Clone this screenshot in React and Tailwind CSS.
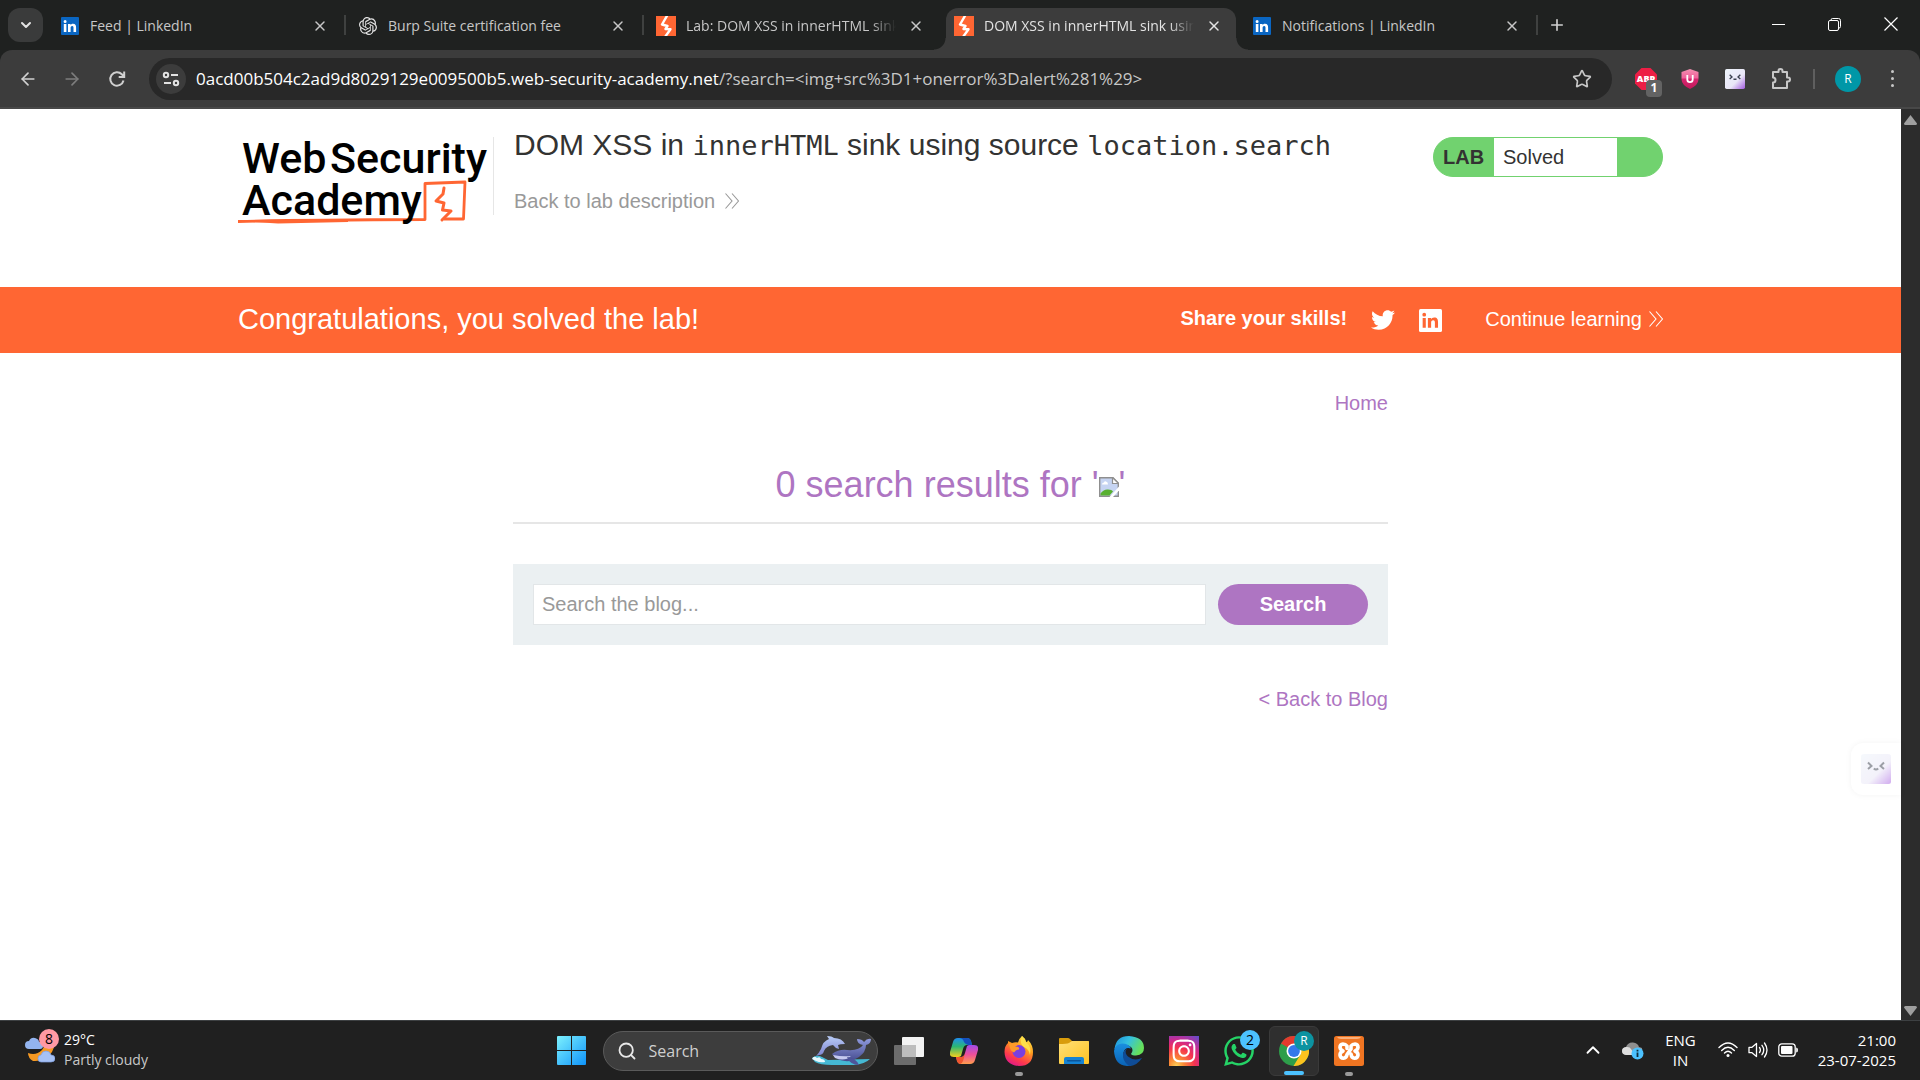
import { ChevronDown, ChevronUp, X, Plus, ArrowLeft, ArrowRight, Star, Search } from "lucide-react";
import { FaTwitter, FaWhatsapp, FaInstagram } from "react-icons/fa";
import { SiOpenai } from "react-icons/si";

function LinkedInIcon() {
  return (
    <svg viewBox="0 0 18 18" className="size-[18px]" aria-hidden="true">
      <rect width="18" height="18" rx="1" fill="#0a66c2" />
      <path fill="#fff" d="M2.8 7h2.6v8H2.8zM4.1 2.9a1.5 1.5 0 1 1 0 3 1.5 1.5 0 0 1 0-3zM7 7h2.5v1.1c.4-.7 1.3-1.3 2.5-1.3 2.6 0 3.1 1.7 3.1 3.9V15h-2.6v-3.9c0-.9 0-2.1-1.3-2.1s-1.6 1-1.6 2V15H7z" />
    </svg>
  );
}

function BoltIcon() {
  return (
    <svg viewBox="0 0 20 20" className="size-5" aria-hidden="true">
      <rect width="20" height="20" fill="#ff6633" />
      <path d="M11.500-1 6 8.500 11.500 10 9.500 13 14.500 13.200 9 21" fill="none" stroke="#fff" strokeWidth="2.400" strokeLinejoin="round" />
    </svg>
  );
}

function FaceIcon({ className }) {
  return (
    <svg viewBox="0 0 30 30" className={className} aria-hidden="true">
      <defs>
        <linearGradient id="faceFill" x1="0" y1="0" x2="1" y2="1">
          <stop offset="0" stopColor="#eef4fb" />
          <stop offset="0.6" stopColor="#e9e6f7" />
          <stop offset="1" stopColor="#a45be0" />
        </linearGradient>
      </defs>
      <rect width="30" height="30" rx="2.500" fill="url(#faceFill)" />
      <path d="M7 8.500 10.500 12 7 15M23 8.500 19.500 12 23 15M12.800 14.500q2.200 2 4.400 0" fill="none" stroke="#3c4250" strokeWidth="2" />
    </svg>
  );
}

const tabs = [
  { title: "Feed | LinkedIn", icon: <LinkedInIcon />, divider: true },
  { title: "Burp Suite certification fee", icon: <SiOpenai className="size-[18px] text-[#e3e3e3]" />, divider: true },
  { title: "Lab: DOM XSS in innerHTML sink", icon: <BoltIcon />, fade: true },
  { title: "DOM XSS in innerHTML sink using source", icon: <BoltIcon />, active: true, fade: true },
  { title: "Notifications | LinkedIn", icon: <LinkedInIcon />, divider: true },
];

function Tab({ title, icon, active, divider, fade }) {
  return (
    <div className="relative flex h-full w-[298px] min-w-0 shrink items-end pl-1 pr-1">
      {active && (
        <>
          <span className="absolute bottom-0 -left-2 size-3 bg-[radial-gradient(circle_at_0_0,transparent_11px,#3c3c3c_12px)]" />
          <span className="absolute bottom-0 -right-2 size-3 bg-[radial-gradient(circle_at_100%_0,transparent_11px,#3c3c3c_12px)]" />
        </>
      )}
      <div className={active ? "flex h-[42px] w-full items-center rounded-t-xl bg-[#3c3c3c] pb-1.5 text-[#e3e3e3]" : "flex h-[42px] w-full items-center pb-1.5 text-[#c7c7c7]"}>
        <span className="ml-2 flex w-5 justify-center">{icon}</span>
        <button type="button" className={fade ? "ml-2.5 w-[210px] overflow-hidden whitespace-nowrap text-left [mask-image:linear-gradient(to_right,black_88%,transparent)]" : "ml-2.5 w-[210px] overflow-hidden whitespace-nowrap text-left"}>
          {title}
        </button>
        <button type="button" aria-label={"Close " + title} className="ml-3 flex size-4 items-center justify-center">
          <X className="size-4" strokeWidth={2.200} />
        </button>
      </div>
      {divider && <span className="absolute right-0 top-[15px] h-5 w-0.5 bg-[#3f4140]" />}
    </div>
  );
}

function TabStrip() {
  return (
    <div className="flex h-[50px] items-stretch bg-[#1f2120] pl-2 text-sm">
      <button type="button" aria-label="Search tabs" className="mt-2 mr-[5px] flex h-[34px] w-[35px] shrink-0 items-center justify-center rounded-xl bg-[#3a3b3b] text-[#e3e3e3]">
        <ChevronDown className="size-4" strokeWidth={3} />
      </button>
      {tabs.map((t) => <Tab key={t.title} {...t} />)}
      <button type="button" aria-label="New tab" className="ml-2.5 flex shrink-0 items-center text-[#d0d0d0]">
        <Plus className="size-[18px]" strokeWidth={2.200} />
      </button>
      <div className="ml-auto flex h-12 items-stretch text-white">
        <button type="button" aria-label="Minimize" className="flex w-14 items-center justify-center">
          <span className="h-px w-[13px] bg-white" />
        </button>
        <button type="button" aria-label="Restore" className="flex w-14 items-center justify-center">
          <svg viewBox="0 0 13 13" className="size-[13px]" fill="none" stroke="#fff" aria-hidden="true">
            <rect x="0.500" y="2.500" width="10" height="10" rx="1.500" />
            <path d="M3 2.500V2Q3 .5 4.500.5h6Q12.500.5 12.500 2.500v6q0 1.500-1.500 1.500h-.5" />
          </svg>
        </button>
        <button type="button" aria-label="Close window" className="flex w-[58px] items-center justify-center">
          <svg viewBox="0 0 14 14" className="size-3.5" fill="none" stroke="#fff" strokeWidth="1.200" aria-hidden="true">
            <path d="M.5.500l13 13M13.500.500l-13 13" />
          </svg>
        </button>
      </div>
    </div>
  );
}

function Toolbar() {
  return (
    <div className="bg-[#1f2120]">
      <div className="flex h-[59px] items-center rounded-t-xl border-b-2 border-[#484848] bg-[#3c3c3c] text-[#c7c7c7]">
        <button type="button" aria-label="Back" className="ml-[18px] text-[#d0d0d0]"><ArrowLeft className="size-5" strokeWidth={2} /></button>
        <button type="button" aria-label="Forward" className="ml-6 text-[#7d7d7d]"><ArrowRight className="size-5" strokeWidth={2} /></button>
        <button type="button" aria-label="Reload" className="ml-[25px] text-[#d0d0d0]">
          <svg viewBox="0 0 20 20" className="size-5" fill="none" stroke="currentColor" strokeWidth="2" aria-hidden="true">
            <path d="M16.500 11.500A6.700 6.700 0 1 1 14.800 5.300L17 7.500M17.200 2.500V8h-5.500" />
          </svg>
        </button>
        <div className="ml-[22px] flex h-[42px] min-w-0 flex-1 items-center rounded-full bg-[#282828] pl-[7px] pr-5">
          <button type="button" aria-label="View site information" className="flex size-[30px] shrink-0 items-center justify-center rounded-full bg-[#3c3c3c]">
            <svg viewBox="0 0 18 16" className="h-4 w-[18px]" fill="none" stroke="#e3e3e3" strokeWidth="2" aria-hidden="true">
              <circle cx="4" cy="4" r="2.200" /><path d="M9 4h7M2 12h7" /><circle cx="14" cy="12" r="2.200" />
            </svg>
          </button>
          <div aria-label="Address" className="ml-2.5 min-w-0 flex-1 overflow-hidden whitespace-nowrap text-[17px] leading-6 text-[#c7c7c7]">
            <span className="text-white">0acd00b504c2ad9d8029129e009500b5.web-security-academy.net</span>
            /?search=&lt;img+src%3D1+onerror%3Dalert%281%29&gt;
          </div>
          <button type="button" aria-label="Bookmark this tab"><Star className="size-5" strokeWidth={2} /></button>
        </div>
        <div className="ml-[23px] flex shrink-0 items-center">
          <button type="button" aria-label="AdBlock Plus, 1 blocked" className="relative">
            <svg viewBox="0 0 22 22" className="size-[22px]" aria-hidden="true">
              <path d="M6.500 0h9L22 6.500v9L15.500 22h-9L0 15.500v-9z" fill="#ed1e45" />
              <text x="11" y="14" textAnchor="middle" fill="#fff" fontSize="9" fontWeight="800">ABP</text>
            </svg>
            <span className="absolute top-3 left-[11px] flex h-[17px] w-4 items-center justify-center rounded bg-[#636363] text-xs font-bold text-white">1</span>
          </button>
          <button type="button" aria-label="Shield extension" className="ml-6">
            <svg viewBox="0 0 18 20" className="h-5 w-[18px]" aria-hidden="true">
              <defs><linearGradient id="shield" x1="0" y1="0" x2="0" y2="1"><stop offset="0" stopColor="#f48fb1" /><stop offset="0.45" stopColor="#f0609a" /><stop offset="0.5" stopColor="#d8266f" /><stop offset="1" stopColor="#c2185b" /></linearGradient></defs>
              <path d="M9 0 17.500 3v7q0 6-8.500 10Q.5 16 .5 10V3z" fill="url(#shield)" />
              <path d="M6.300 6v4.500a2.700 2.700 0 0 0 5.400 0V6" fill="none" stroke="#fff" strokeWidth="1.800" />
            </svg>
          </button>
          <button type="button" aria-label="Face extension" className="ml-[26px]"><FaceIcon className="size-5" /></button>
          <button type="button" aria-label="Extensions" className="ml-[25px]">
            <svg viewBox="0 0 22 22" className="size-[22px]" fill="none" stroke="currentColor" strokeWidth="2" strokeLinejoin="round" aria-hidden="true">
              <path d="M3 4h5.500V3a2 2 0 0 1 4 0v1H17v5.500h1a2 2 0 0 1 0 4h-1V20H3v-5.500a2.500 2.500 0 0 0 0-5z" />
            </svg>
          </button>
          <span className="ml-[21px] h-5 w-0.5 bg-[#5f5f5f]" />
          <button type="button" aria-label="Profile" className="ml-5 flex size-[26px] items-center justify-center rounded-full bg-[#0097a7] text-xs text-white">R</button>
          <button type="button" aria-label="Menu" className="mr-[18px] ml-[21px] flex w-5 flex-col items-center gap-1">
            <span className="size-[3px] rounded-full bg-[#c7c7c7]" />
            <span className="size-[3px] rounded-full bg-[#c7c7c7]" />
            <span className="size-[3px] rounded-full bg-[#c7c7c7]" />
          </button>
        </div>
      </div>
    </div>
  );
}

function DoubleChevron() {
  return (
    <svg viewBox="0 0 14 16" className="h-4 w-3.5" fill="none" stroke="currentColor" strokeWidth="1.100" aria-hidden="true">
      <path d="M.5.500 7 8 .5 15.500M7 .5 13.500 8 7 15.500" />
    </svg>
  );
}

function AcademyLogo() {
  return (
    <a href="#academy" aria-label="Web Security Academy">
      <svg viewBox="0 0 250 92" className="h-[92px] w-[250px]" fontFamily="Roboto, sans-serif" fontSize="43" fontWeight="500" aria-hidden="true">
        <path d="M0 84.500Q60 83 187 82.500V46.500L227 45 225.500 82H206" fill="none" stroke="#ff6633" strokeWidth="2.800" strokeLinejoin="round" />
        <path d="M0 84l110-1v2L40 86.500z" fill="#ff6633" />
        <path d="M206 51 205 57 198 64 206 66 204.500 73 213 74 204 83" fill="none" stroke="#ff6633" strokeWidth="3" strokeLinejoin="round" strokeLinecap="round" />
        <text x="4" y="36">Web</text>
        <text x="92" y="36">Security</text>
        <text x="4" y="78">Academy</text>
      </svg>
    </a>
  );
}

function LabHeader() {
  return (
    <header className="mx-auto flex h-[178px] w-full max-w-[1425px] items-start">
      <div className="mt-7 flex h-[78px] w-64 shrink-0 border-r border-[#e6e6e6]">
        <AcademyLogo />
      </div>
      <div className="ml-5 pt-4">
        <h2 className="h-10 text-3xl leading-10 text-[#333332]">
          DOM XSS in <code className="font-['DejaVu_Sans_Mono',monospace] text-[27px]">innerHTML</code> sink using source <code className="font-['DejaVu_Sans_Mono',monospace] text-[27px]">location.search</code>
        </h2>
        <a href="#lab" className="mt-6 flex items-center gap-2.5 text-xl leading-6 text-[#999]">
          Back to lab description <DoubleChevron />
        </a>
      </div>
      <div className="mt-7 ml-auto flex h-10 w-[230px] shrink-0 items-center overflow-hidden rounded-full border border-[#71d26f] bg-[#71d26f] text-xl text-[#333332]">
        <span className="w-[60px] pl-[9px] font-bold">LAB</span>
        <span className="flex h-full w-[123px] items-center bg-white pl-[9px]">Solved</span>
      </div>
    </header>
  );
}

function SolvedBanner() {
  return (
    <section className="bg-[#ff6633] text-white">
      <div className="mx-auto flex h-[66px] max-w-[1425px] items-center">
        <h4 className="mr-auto text-[29px]">Congratulations, you solved the lab!</h4>
        <span className="pb-1 text-xl font-bold">Share your skills!</span>
        <a href="#twitter" aria-label="Share on Twitter" className="ml-6"><FaTwitter className="size-6" /></a>
        <a href="#linkedin" aria-label="Share on LinkedIn" className="ml-6">
          <svg viewBox="0 0 22 22" className="size-[23px]" aria-hidden="true">
            <rect width="22" height="22" rx="1.500" fill="#fff" />
            <path fill="#ff6633" d="M3.500 8.500h3V18h-3zM5 3.600a1.800 1.800 0 1 1 0 3.600 1.800 1.800 0 0 1 0-3.600zM8.500 8.500h3v1.300c.5-.9 1.500-1.600 3-1.600 3.100 0 3.700 2 3.700 4.700V18h-3v-4.700c0-1.100 0-2.500-1.600-2.500s-2 1.200-2 2.400V18h-3.100z" />
          </svg>
        </a>
        <a href="#learning" className="ml-[43px] flex items-center gap-[7px] pb-0.5 text-xl">Continue learning <DoubleChevron /></a>
      </div>
    </section>
  );
}

function BrokenImage() {
  return (
    <svg viewBox="0 0 20 20" className="inline size-5 align-baseline" role="img" aria-label="Missing">
      <path d="M.7.700H14L19.300 6v13.300H.700z" fill="#c6d4f2" stroke="#8f8f8f" strokeWidth="1.400" />
      <path d="M13.500.500V6.500h6z" fill="#fff" stroke="#8f8f8f" strokeWidth="1.200" />
      <path d="M3 7.500q0-2 2-2 .5-1.800 2-1 2 .5 2 3z" fill="#fff" />
      <path d="M1.500 18.500v-2Q5 12 9 12.500q4 0 5 2l-3.500 4z" fill="#58b030" />
      <path d="M20 9.500 10.500 20H14l6-6.500z" fill="#fff" />
    </svg>
  );
}

function Blog() {
  return (
    <main className="mx-auto w-full max-w-[875px] pt-[38px] text-xl leading-6 text-[#ae75c2]">
      <nav className="flex justify-end"><a href="#home">Home</a></nav>
      <h1 className="mt-[50px] border-b-2 border-[#e6e6e6] pb-[17px] text-center text-4xl leading-10">
        0 search results for '<BrokenImage />'
      </h1>
      <form className="mt-10 flex gap-3 bg-[#ebf0f2] p-5" onSubmit={(e) => e.preventDefault()}>
        <input type="text" aria-label="Search the blog" placeholder="Search the blog..." className="h-[41px] min-w-0 flex-1 border border-[#e2e6e8] bg-white px-2 text-[#333] outline-none placeholder:text-[#999]" />
        <button type="submit" className="h-[41px] w-[150px] rounded-full bg-[#ae75c2] pb-0.5 font-bold text-white">Search</button>
      </form>
      <div className="mt-[42px] flex justify-end"><a href="#blog">&lt; Back to Blog</a></div>
    </main>
  );
}

function Scrollbar() {
  return (
    <div className="flex w-[19px] shrink-0 flex-col items-center justify-between bg-[#2c2c2c] pt-1.5 pb-1" aria-hidden="true">
      <svg viewBox="0 0 13 10" className="h-2.5 w-[13px]"><path d="M6.500 0 13 8.500q0 1.500-1.500 1.500h-10Q0 10 0 8.500z" fill="#9f9f9f" /></svg>
      <svg viewBox="0 0 13 10" className="h-2.5 w-[13px]"><path d="M6.500 10 13 1.500Q13 0 11.500 0h-10Q0 0 0 1.500z" fill="#9f9f9f" /></svg>
    </div>
  );
}

function WeatherIcon() {
  return (
    <svg viewBox="0 0 30 30" className="size-[30px]" aria-hidden="true">
      <path d="M28 2q3 8-1 15-7 10-19 9-5-3-5-8 8 3 14-3Q21 10 20 3z" fill="#f79a23" />
      <path d="M4 14q-4 0-4-4t4-4q2-4 6-3 4 1 4 4 4 0 4 4 0 3-3 3z" fill="#93b4ef" />
      <path d="M16 27q-3 0-3-3.500t3-3.500q1-4 5-4t5 4q4 0 4 3.500T26 27z" fill="#a6c1f5" stroke="#7e9fe0" strokeWidth=".7" />
    </svg>
  );
}

function DolphinArt() {
  return (
    <svg viewBox="0 0 62 30" className="h-[30px] w-[62px]" aria-hidden="true">
      <defs>
        <linearGradient id="dolphin" x1="0" y1="0" x2="0" y2="1"><stop offset="0" stopColor="#b9cdf7" /><stop offset="1" stopColor="#7d82cf" /></linearGradient>
        <linearGradient id="whale" x1="0" y1="0" x2="0" y2="1"><stop offset="0" stopColor="#8f99dc" /><stop offset="1" stopColor="#454b8f" /></linearGradient>
      </defs>
      <path d="M1 22q5-4 10-1l6 3 42-1q-5 5-16 6H21Q9 29 4 26z" fill="#45b8d3" />
      <path d="M1 23q2-4 5-1 3-2 4 1 4 0 4 3-5 1-9-1z" fill="#e7f8fd" />
      <path d="M5 20Q8 17 10 13 12 5 18 3L16 0q5 0 7 2 8 0 11 6-5 0-7 1l1 4q-4-1-6-4-7 1-9 6-1 4-5 4z" fill="url(#dolphin)" />
      <path d="M21 18q7-5 15-4 12 1 16-5-6-1-6-6 5 0 7 3 3-4 7-3 0 5-5 6 0 7-7 12-8 5-14 4-9-1-13-7z" fill="url(#whale)" />
      <path d="M22 19q10 2 18 1-6 6-16 2z" fill="#c5c9ef" />
      <path d="M36 21q8 0 12 8-9 0-12-8z" fill="#4e5499" />
    </svg>
  );
}

function WindowsIcon() {
  return (
    <svg viewBox="0 0 29 29" className="size-[29px]" aria-hidden="true">
      <defs><linearGradient id="win" gradientUnits="userSpaceOnUse" x1="0" y1="0" x2="29" y2="29"><stop offset="0" stopColor="#7df1fd" /><stop offset="1" stopColor="#0f94fb" /></linearGradient></defs>
      <path d="M0 1q0-1 1-1h13v14H0zM15 0h13q1 0 1 1v13H15zM0 15h14v14H1q-1 0-1-1zM15 15h14v13q0 1-1 1H15z" fill="url(#win)" />
    </svg>
  );
}

function TaskViewIcon() {
  return (
    <svg viewBox="0 0 30 28" className="h-7 w-[30px]" aria-hidden="true">
      <rect x="8" y="0" width="22" height="20" rx="1" fill="#f3f3f3" />
      <rect x="0" y="8" width="22" height="20" rx="1" fill="#858585" fillOpacity=".75" />
      <rect x="8" y="8" width="14" height="12" fill="#bdbdbd" />
    </svg>
  );
}

function CopilotIcon() {
  return (
    <svg viewBox="0 0 28 26" className="h-[26px] w-7" aria-hidden="true">
      <defs>
        <linearGradient id="cpA" x1="0" y1="0" x2="0" y2="1"><stop offset="0" stopColor="#1f8df0" /><stop offset=".45" stopColor="#2bb673" /><stop offset="1" stopColor="#f4d11e" /></linearGradient>
        <linearGradient id="cpB" x1="0" y1="0" x2="0" y2="1"><stop offset="0" stopColor="#a04be8" /><stop offset=".5" stopColor="#ee4f9a" /><stop offset="1" stopColor="#ff9d4d" /></linearGradient>
      </defs>
      <path d="M17 0q3 0 4 3l1 4h-5q-3 0-4 4l-2 7q-1 1-3 1H4q-5 0-4-5L3 4q1-4 5-4z" fill="url(#cpA)" />
      <path d="M11 26q-3 0-4-3l-1-4h5q3 0 4-4l2-7q1-1 3-1h4q5 0 4 5l-3 10q-1 4-5 4z" fill="url(#cpB)" />
      <path d="M9 0h8q3 0 4 3l1 4h-4q-3-1-4-3Q13 0 9 0z" fill="#1550bd" />
      <path d="M6 19h5q3 0 4-4-1 5-2 8-1 3-3 3-2 0-3-3z" fill="#f0552f" />
    </svg>
  );
}

function FirefoxIcon() {
  return (
    <svg viewBox="0 0 30 30" className="size-[30px]" aria-hidden="true">
      <defs>
        <linearGradient id="ff" x1=".8" y1="0" x2=".3" y2="1"><stop offset="0" stopColor="#fff04a" /><stop offset=".4" stopColor="#ff9a1f" /><stop offset=".75" stopColor="#ff3b4b" /><stop offset="1" stopColor="#e0188b" /></linearGradient>
      </defs>
      <path d="M18 0q3 2 4 6 2 0 2-2 5 5 5 12 0 14-14 14Q1 29 .500 16 .5 10 4 7V5l4 2q3-1 6-.5 1-4 4-6.500z" fill="url(#ff)" />
      <circle cx="15" cy="15.500" r="6.500" fill="#7a3fe0" />
      <path d="M5 8q5-2 9 0-1 2-3 2.500 5 0 4 3-3 0-5 3-4-1-5-8.500z" fill="#ff9a2a" />
      <path d="M18 0q3 2 4 6 6 5 4 13-1-6-6-8-5-3-2-11z" fill="#ffe04a" />
    </svg>
  );
}

function FolderIcon() {
  return (
    <svg viewBox="0 0 30 26" className="h-[26px] w-[30px]" aria-hidden="true">
      <defs><linearGradient id="fold" x1="0" y1="0" x2="1" y2="1"><stop offset="0" stopColor="#ffe078" /><stop offset="1" stopColor="#ffc321" /></linearGradient></defs>
      <path d="M0 1q0-1 1-1h8q1 0 2 1l2 2h16q1 0 1 1v4H0z" fill="#d99c0b" />
      <path d="M0 6q8 0 10-1l3-2h16q1 0 1 1v21q0 1-1 1H1q-1 0-1-1z" fill="url(#fold)" />
      <path d="M5 21q0-2 2-2h16q2 0 2 2v5H5z" fill="#1583d4" />
      <rect x="8" y="22" width="14" height="1.400" rx=".7" fill="#0b569c" />
    </svg>
  );
}

function EdgeIcon() {
  return (
    <svg viewBox="0 0 30 30" className="size-[30px]" aria-hidden="true">
      <defs>
        <linearGradient id="edA" x1="0" y1="0" x2="1" y2=".4"><stop offset="0" stopColor="#1c8fdc" /><stop offset=".5" stopColor="#35c1e0" /><stop offset="1" stopColor="#66e05a" /></linearGradient>
        <linearGradient id="edB" x1="0" y1="0" x2="0" y2="1"><stop offset="0" stopColor="#1a8fe0" /><stop offset="1" stopColor="#0a62b5" /></linearGradient>
      </defs>
      <path d="M.500 13Q2 0 15 0q15 1 15 12 0 7-8 7.500-4 0-5-1.500 3-4 0-7-6-5-16.500 2z" fill="url(#edA)" />
      <path d="M0 15Q1 8 8 7.500q7 0 9 5-6-2-7.500 4-1 9 8.500 13.300Q1 32 0 15z" fill="url(#edB)" />
      <path d="M13 12.500q-3 4 1 8 6 5 14 1.500-5 8-13 7.900Q8 25 9 18q1-4 4-5.500z" fill="#0f4c96" />
    </svg>
  );
}

function InstagramIcon() {
  return (
    <span className="flex size-[30px] items-center justify-center bg-[radial-gradient(circle_at_25%_100%,#fdd25a_0%,#fb8a35_20%,#f5344f_48%,#cc2a90_70%,#5a4fd0_100%)] text-white">
      <FaInstagram className="size-[26px]" />
    </span>
  );
}

function ChromeIcon() {
  return (
    <svg viewBox="0 0 30 30" className="size-[30px]" aria-hidden="true">
      <circle cx="15" cy="15" r="15" fill="#2e9e4a" />
      <path d="M15 15 2 7.500A15 15 0 0 1 28 7.500H15z" fill="#e33b2e" />
      <path d="M28 7.500A15 15 0 0 1 14.500 30l7-11.500L15 7.500z" fill="#fcc31e" />
      <circle cx="15" cy="15" r="7.500" fill="#fff" />
      <circle cx="15" cy="15" r="5.900" fill="#3478ea" />
    </svg>
  );
}

function XamppIcon() {
  return (
    <svg viewBox="0 0 30 30" className="size-[30px]" aria-hidden="true">
      <rect width="30" height="30" rx="2.500" fill="#f07522" />
      <path d="M3 1h24q-1 2-4 2H7Q4 3 3 1z" fill="#f9b07c" />
      <path d="M13 12.500V10q-1.500-2-4-2-3 .3-3 3.300Q6.500 14 9 15q-3 1.300-3 4 .3 3.200 3.500 3.200Q12.500 22 13 18.500L17 13V10q1.500-2 4-2 3 .3 3 3.300-.5 2.700-3 3.700 3 1.300 3 4-.3 3.200-3.500 3.200Q17.500 22 17 18" fill="none" stroke="#fff" strokeWidth="3.600" strokeLinecap="round" strokeLinejoin="round" />
    </svg>
  );
}

const apps = [
  { name: "Task view", icon: <TaskViewIcon /> },
  { name: "Copilot", icon: <CopilotIcon /> },
  { name: "Firefox", icon: <FirefoxIcon />, running: true },
  { name: "File Explorer", icon: <FolderIcon /> },
  { name: "Edge", icon: <EdgeIcon /> },
  { name: "Instagram", icon: <InstagramIcon /> },
  { name: "WhatsApp", icon: <FaWhatsapp className="size-[34px] text-[#25d366]" />, badge: "2" },
  { name: "Chrome", icon: <ChromeIcon />, badge: "R", active: true },
  { name: "XAMPP", icon: <XamppIcon />, running: true },
];

function AppButton({ name, icon, badge, active, running }) {
  return (
    <button type="button" aria-label={name} className="flex h-full w-[55px] items-center justify-center">
      <span className={active ? "relative flex size-[50px] items-center justify-center rounded-md border border-[#3a3a3a] bg-[#2f2f2f]" : "relative flex size-[50px] items-center justify-center"}>
        {icon}
        {badge && (
          <span className={active ? "absolute top-1 right-1 flex size-5 items-center justify-center rounded-full bg-[#0c93a1] text-xs text-white" : "absolute top-1 right-1 flex size-5 items-center justify-center rounded-full bg-[#4cc2ff] text-sm text-black"}>{badge}</span>
        )}
        {running && <span className="absolute bottom-0 left-[21px] h-1 w-2 rounded-full bg-[#9a9a9a]" />}
        {active && <span className="absolute bottom-0 left-3.5 h-1 w-5 rounded-full bg-[#4cc2ff]" />}
      </span>
    </button>
  );
}

function Taskbar() {
  return (
    <footer className="grid h-[60px] shrink-0 grid-cols-[1fr_auto_1fr] items-center border-t border-[#3d4042] bg-[#202020] text-[15px] leading-5 text-white">
      <button type="button" className="flex items-center pb-0.5 text-left text-sm leading-5">
        <span className="relative ml-[25px]">
          <WeatherIcon />
          <span className="absolute -top-1.5 left-3.5 flex size-5 items-center justify-center rounded-full bg-[#ff99a4] text-sm text-black">8</span>
        </span>
        <span className="ml-[9px]">
          <span className="block">29°C</span>
          <span className="block text-[#c8c8c8]">Partly cloudy</span>
        </span>
      </button>
      <div className="flex h-full items-center">
        <button type="button" aria-label="Start" className="flex w-[55px] justify-center"><WindowsIcon /></button>
        <label className="ml-1 mr-1 flex h-10 w-[275px] items-center rounded-full border border-[#5a5a5a] bg-[#3d3d3d] pl-[13px] pr-1">
          <Search className="size-5 shrink-0 text-[#e8e8e8]" strokeWidth={2.200} />
          <input type="text" aria-label="Search" placeholder="Search" className="ml-3 min-w-0 flex-1 bg-transparent text-base outline-none placeholder:text-[#cfcfcf]" />
          <DolphinArt />
        </label>
        {apps.map((a) => <AppButton key={a.name} {...a} />)}
      </div>
      <div className="flex items-center justify-end pr-6 pb-0.5">
        <button type="button" aria-label="Hidden icons"><ChevronUp className="size-[22px]" strokeWidth={2} /></button>
        <button type="button" aria-label="OneDrive" className="ml-[18px]">
          <svg viewBox="0 0 22 20" className="h-5 w-[22px]" aria-hidden="true">
            <path d="M4 15q-4-.5-4-4t4-4q2-5 7-4.500Q16 3 17 7l3 1v7z" fill="#8f8f8f" />
            <path d="M4 15q-4-.5-4-4t4-4q4-.5 5 2l4 6z" fill="#dedede" />
            <circle cx="15.500" cy="13.500" r="6" fill="#4cc2ff" />
            <path d="M15.500 9.700v1.800M15.500 12.500v4.500" stroke="#10303f" strokeWidth="1.800" />
          </svg>
        </button>
        <button type="button" aria-label="Input language" className="ml-[21px] text-center">
          <span className="block">ENG</span>
          <span className="block">IN</span>
        </button>
        <button type="button" aria-label="Network, volume and battery" className="ml-[22px] flex items-center gap-2.5">
          <svg viewBox="0 0 20 16" className="h-4 w-5" fill="none" stroke="#fff" strokeWidth="1.400" strokeLinecap="round" aria-hidden="true">
            <path d="M1 5.500q9-9 18 0M3.700 8.500q6.300-6.300 12.600 0M6.500 11q3.500-3.500 7 0" />
            <circle cx="10" cy="13.500" r="1.500" fill="#fff" stroke="none" />
          </svg>
          <svg viewBox="0 0 20 18" className="h-[18px] w-5" fill="none" stroke="#fff" strokeWidth="1.300" strokeLinejoin="round" strokeLinecap="round" aria-hidden="true">
            <path d="M1 6.300h3L8.500 2.500v13L4 11.700H1zM11.500 6.500q1.800 2.500 0 5M14 4.300q3.500 4.700 0 9.400M16.500 2q5 7 0 14" />
          </svg>
          <svg viewBox="0 0 20 14" className="h-3.5 w-5" aria-hidden="true">
            <rect x=".8" y=".8" width="16.400" height="12.400" rx="3" fill="none" stroke="#fff" strokeWidth="1.300" />
            <rect x="3" y="3" width="11.500" height="8" rx="1" fill="#fff" />
            <path d="M18.200 4.500q1.800 0 1.800 2.500t-1.800 2.500z" fill="#fff" />
          </svg>
        </button>
        <button type="button" aria-label="Clock" className="ml-5 text-right">
          <span className="block">21:00</span>
          <span className="block">23-07-2025</span>
        </button>
      </div>
    </footer>
  );
}

export default function App() {
  return (
    <div className="flex min-h-screen flex-col font-['Open_Sans','Noto_Sans',sans-serif]">
      <TabStrip />
      <Toolbar />
      <div className="flex flex-1">
        <div className="relative min-w-0 flex-1 bg-white font-['Liberation_Sans',Arial,sans-serif]">
          <LabHeader />
          <SolvedBanner />
          <Blog />
          <button type="button" aria-label="Open assistant" className="absolute right-0 bottom-[225px] rounded-l-xl bg-white py-[11px] pr-2.5 pl-2.5 shadow-[0_0_6px_rgba(0,0,0,0.05)]">
            <FaceIcon className="size-[30px] opacity-50" />
          </button>
        </div>
        <Scrollbar />
      </div>
      <Taskbar />
    </div>
  );
}
